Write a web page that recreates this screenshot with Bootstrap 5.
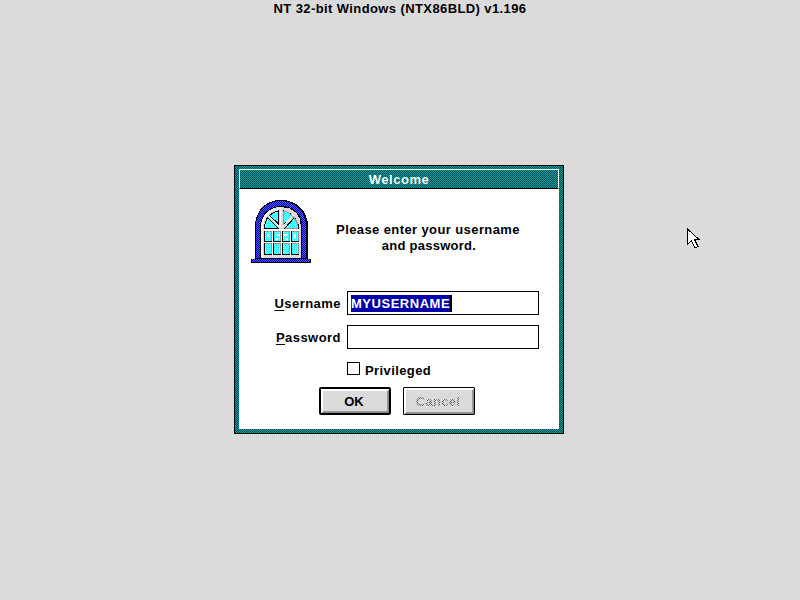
<!DOCTYPE html>
<html lang="en">
<head>
<meta charset="utf-8">
<meta name="viewport" content="width=device-width, initial-scale=1">
<title>Welcome</title>
<link rel="stylesheet" href="https://cdn.jsdelivr.net/npm/bootstrap@5.3.0/dist/css/bootstrap.min.css">
<style>
:root{--face:#dbdbdb;--dither:repeating-conic-gradient(#00a0a0 0 25%,#004c54 0 50%) 0 0/2px 2px}
body{width:800px;height:600px;background:var(--face);color:#000;font:700 13px/16px "Liberation Sans",Arial,sans-serif;letter-spacing:.4px;cursor:default}
.build-line{height:165px;padding-top:1px}
.dialog-frame{width:330px;height:269px;margin-left:234px;border:1px solid #000;padding:3px 4px 4px;background:var(--dither)}
.title-strip{height:20px;border:1px solid #fff;border-bottom-color:#000;color:#fff;line-height:19px;letter-spacing:.55px}
.client{height:240px;padding:11px 20px 0 12px}
.message{width:206px;padding-top:22px;margin-left:14px;letter-spacing:.4px}
.message .second{padding-left:2px;letter-spacing:.25px}
.fields{margin-top:27px;gap:10px}
.field-label{width:90px;margin-right:6px;padding-top:1px;letter-spacing:.46px}
.field-label span{text-decoration:underline;text-underline-offset:2px;text-decoration-thickness:1px}
.field-box{width:192px;height:24px;border:1px solid #000;padding:3px}
.picked{height:17px;width:101px;line-height:17px;background:#0000a8;color:#fff;border-right:2px solid #000;letter-spacing:.52px}
.tick{width:13px;height:13px;border:1px solid #000}
.check-row{margin:13px 0 0 96px;height:13px;gap:5px}
.actions{margin:12px 0 0 68px;gap:12px}
.push{width:72px;height:28px;border:1px solid #000;border-radius:1px;background:var(--face);padding:2px 2px 0 0;color:#000;font:inherit;box-shadow:inset 1px 1px #fff,inset -1px -1px #888,inset 2px 2px #fff,inset -2px -2px #999}
.push.main{border-width:2px;border-radius:2px;letter-spacing:0}
.push .off{color:transparent;background:repeating-conic-gradient(#555 0 25%,#dbdbdb 0 50%) 0 0/2px 2px;-webkit-background-clip:text;background-clip:text;letter-spacing:.3px}
.pointer{left:687px;top:228px}
</style>
<script src="https://cdn.jsdelivr.net/npm/bootstrap@5.3.0/dist/js/bootstrap.bundle.min.js"></script>
</head>
<body class="m-0 overflow-hidden position-relative">
<div class="build-line text-center">NT 32-bit Windows (NTX86BLD) v1.196</div>
<main class="dialog-frame">
  <div class="title-strip text-center">Welcome</div>
  <form class="client bg-white" onsubmit="return false">
    <div class="d-flex">
      <svg width="60" height="64" viewBox="0 0 60 64" shape-rendering="crispEdges" aria-hidden="true">
        <defs>
          <pattern id="blue" width="2" height="2" patternUnits="userSpaceOnUse"><path fill="#0000a8" d="M0 0h2v2H0z"/><path fill="#5454ff" d="M0 0h1v1H0zM1 1h1v1H1z"/></pattern>
          <pattern id="glass" width="2" height="2" patternUnits="userSpaceOnUse"><path fill="#38f4ff" d="M0 0h2v2H0z"/><path fill="#c8ffff" d="M0 0h1v1H0z"/></pattern>
        </defs>
        <path fill="#000" d="M4 59V27C4 10 15 0 30 0s27 10 27 27v32h3v4H0v-4z"/>
        <path fill="url(#blue)" d="M5 58V27C5 11 16 1 30 1s25 10 25 26v31z"/>
        <path fill="#000" d="M9 58V27C9 14 18 6 30.500 6S51 14 51 27v31z"/>
        <path fill="#dbdbdb" d="M10 58V27C10 15 18 7 30.500 7S50 15 50 27v31z"/>
        <path fill="#fff" d="M10 57V27c0-11 7-19 20-19v1c-11 0-18 8-18 18v30z"/>
        <path fill="url(#blue)" d="M1 59h58v3H1z"/>
        <path fill="url(#glass)" stroke="#000" d="M13.500 28.500v-3c1-4 2-6 3-8l11 11zM18.500 15.500c3-3 6-4 9-4.500v13zM32.500 11c4 1 7 2 9 4.500l-9 9zM43.500 17.500c2 2 3 5 4 8v3h-14z"/>
        <path fill="none" stroke="#999" d="M32.500 11v13.500M33 11c5 1 12 6 14 14.500M34 28.500h13"/>
        <path fill="none" stroke="#fff" d="M17 15l12 12M29.500 9v18M43 14L32 26M13 29.500h35"/>
        <g fill="url(#glass)">
          <path d="M13 31h8v11h-8zM22 31h8v11h-8zM31 31h8v11h-8zM40 31h8v11h-8z"/>
          <path d="M13 43h8v12h-8zM22 43h8v12h-8zM31 43h8v12h-8zM40 43h8v12h-8z"/>
        </g>
        <g fill="none" stroke="#999">
          <path d="M13 31.500h7.500V42M22 31.500h7.500V42M31 31.500h7.500V42M40 31.500h7.500V42"/>
          <path d="M13 43.500h7.500V55M22 43.500h7.500V55M31 43.500h7.500V55M40 43.500h7.500V55"/>
        </g>
        <g fill="none" stroke="#000">
          <path d="M13.500 31v10.500H21M22.500 31v10.500H30M31.500 31v10.500H39M40.500 31v10.500H48"/>
          <path d="M13.500 43v11.500H21M22.500 43v11.500H30M31.500 43v11.500H39M40.500 43v11.500H48"/>
        </g>
        <path stroke="#fff" fill="none" d="M12 30.500h37M21.500 31v25M30.500 31v25M39.500 31v25M12 42.500h37"/>
        <path fill="#fff" d="M16 34h2v3h-2zM24 38h3v2h-3zM26 34h2v2h-2zM33 34h3v2h-3zM34 39h3v1h-3zM43 34h2v4h-2z"/>
      </svg>
      <div class="message text-center">Please enter your username<br><span class="second">and password.</span></div>
    </div>
    <div class="fields d-flex flex-column">
      <div class="d-flex align-items-center">
        <label class="field-label text-end"><span>U</span>sername</label>
        <div class="field-box bg-white"><div class="picked">MYUSERNAME</div></div>
      </div>
      <div class="d-flex align-items-center">
        <label class="field-label text-end"><span>P</span>assword</label>
        <div class="field-box bg-white"></div>
      </div>
    </div>
    <div class="check-row d-flex align-items-center"><span class="tick"></span><span class="pt-1">Privileged</span></div>
    <div class="actions d-flex">
      <button class="push main" type="button">OK</button>
      <button class="push" type="button"><span class="off">Cancel</span></button>
    </div>
  </form>
</main>
<svg class="pointer position-absolute" width="13" height="21" viewBox="0 0 13 21" shape-rendering="crispEdges" aria-hidden="true"><path fill="#fff" stroke="#000" d="M.5 1v15.500l4-4 3.500 7.500 3-1.500-3.500-7H12z"/></svg>
</body>
</html>
